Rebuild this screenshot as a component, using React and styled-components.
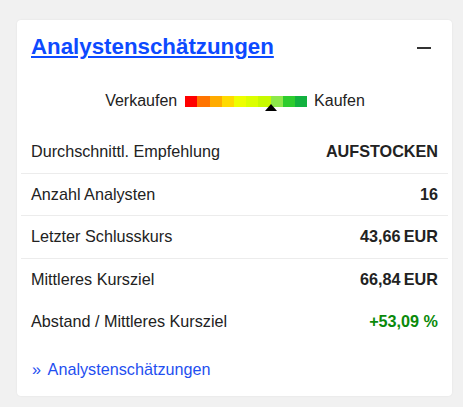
import React from "react";
import styled, { createGlobalStyle } from "styled-components";

const Global = createGlobalStyle`
  html, body { margin: 0; padding: 0; background: #f1f1f1; }
  body { font-family: "Liberation Sans", Arial, sans-serif; color: #222; }
`;

const Page = styled.div`
  padding: 20px 11px 11px 17px;
`;

const Card = styled.section`
  width: 435px;
  height: 376px;
  box-sizing: border-box;
  background: #fff;
  border-radius: 4px;
  box-shadow: 0 0 2px rgba(0, 0, 0, 0.08);
  padding: 14px 4px 0 4px;
`;

const Header = styled.div`
  display: flex;
  align-items: center;
  justify-content: space-between;
  padding: 0 17px 0 10px;
  height: 26px;
`;

const Title = styled.a`
  font-size: 22.3px;
  font-weight: bold;
  line-height: 26px;
  color: #0d4aff;
  text-decoration: underline;
  text-underline-offset: 2px;
  text-decoration-thickness: 2px;
`;

const Minus = styled.span`
  display: block;
  width: 14px;
  height: 2px;
  background: #333;
  margin-top: 1px;
`;

const ScaleRow = styled.div`
  display: flex;
  justify-content: center;
  align-items: center;
  margin-top: 31px;
  height: 20px;
  font-size: 16px;
  line-height: 20px;
  padding-left: 1px;
`;

const BarWrap = styled.div`
  position: relative;
  display: flex;
  margin: 1px 7px 0 8px;
  height: 11px;
`;

const Seg = styled.span`
  display: block;
  width: 12.2px;
  height: 11px;
  background: ${(p) => p.$c};
`;

const Marker = styled.span`
  position: absolute;
  top: 8px;
  width: 0;
  height: 0;
  border-left: 6px solid transparent;
  border-right: 6px solid transparent;
  border-bottom: 7px solid #000;
  transform: translateX(-6px);
`;

const Rows = styled.div`
  margin-top: 20px;
`;

const Row = styled.div`
  display: flex;
  justify-content: space-between;
  align-items: center;
  padding: 12px 10px 12px 10px;
  line-height: 17.5px;
  font-size: 16.2px;
  border-bottom: 1px solid ${(p) => (p.$line ? "#ececec" : "transparent")};
`;

const Label = styled.span`
  color: #222;
`;

const Value = styled.span`
  font-weight: bold;
  color: ${(p) => (p.$positive ? "#0a8a0a" : "#222")};
`;

const Footer = styled.div`
  padding: 16px 10px 0 11px;
  font-size: 16.2px;
  line-height: 18px;
`;

const MoreLink = styled.a`
  color: #1f4ff0;
  text-decoration: none;
`;

const Chevron = styled.span`
  margin-right: 3px;
`;

const colors = [
  "#ff0000",
  "#ff7400",
  "#ffab00",
  "#ffda00",
  "#eeff00",
  "#dcff00",
  "#c8fa00",
  "#8de84a",
  "#2ecc2e",
  "#12b13f",
];

const rows = [
  { label: "Durchschnittl. Empfehlung", value: "AUFSTOCKEN", line: true },
  { label: "Anzahl Analysten", value: "16", line: true },
  { label: "Letzter Schlusskurs", value: "43,66\u2009EUR", line: true },
  { label: "Mittleres Kursziel", value: "66,84\u2009EUR", line: false },
  { label: "Abstand / Mittleres Kursziel", value: "+53,09 %", line: false, positive: true },
];

export default function App() {
  return (
    <>
      <Global />
      <Page>
        <Card>
          <Header>
            <Title href="#">Analystenschätzungen</Title>
            <Minus />
          </Header>
          <ScaleRow>
            <span>Verkaufen</span>
            <BarWrap>
              {colors.map((c) => (
                <Seg key={c} $c={c} />
              ))}
              <Marker style={{ left: `${12.2 * 7}px` }} />
            </BarWrap>
            <span>Kaufen</span>
          </ScaleRow>
          <Rows>
            {rows.map((r) => (
              <Row key={r.label} $line={r.line}>
                <Label>{r.label}</Label>
                <Value $positive={r.positive}>{r.value}</Value>
              </Row>
            ))}
          </Rows>
          <Footer>
            <MoreLink href="#">
              <Chevron>»</Chevron> Analystenschätzungen
            </MoreLink>
          </Footer>
        </Card>
      </Page>
    </>
  );
}
